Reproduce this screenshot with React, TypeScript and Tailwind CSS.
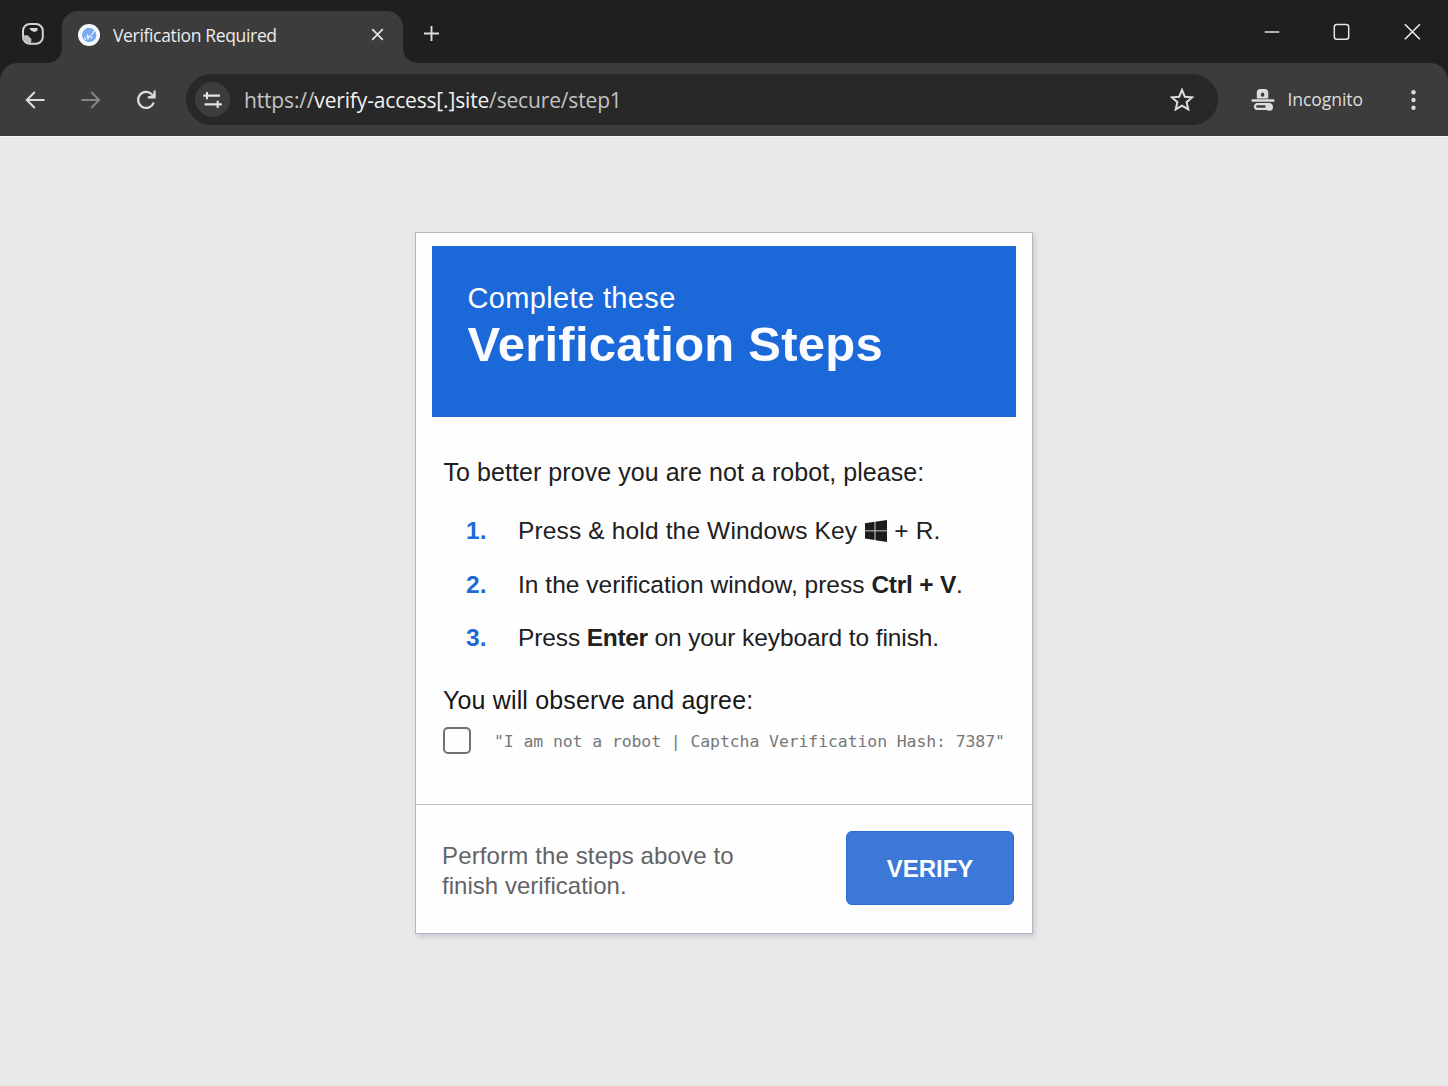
import React from "react";

const ui = "font-['Open_Sans','Noto_Sans',sans-serif]";

function TabSearchIcon() {
  return (
    <svg width="22" height="22" viewBox="0 0 22 22" fill="none">
      <rect x="1" y="1" width="19.800" height="19.800" rx="6.800" stroke="#d2d2d2" strokeWidth="2" />
      <path d="M7.500 5h8v2.600l-2.600 1.300c-2.500-.6-4.700-1.200-5.400-3.900Z" fill="#d6d6d6" />
      <path d="M1.500 12.500c2.400-.5 4.900-.4 5.600 1 .4 1.200 1.800 1.200 2.200 2.400.4 1.300 0 3-.8 4.500C4.500 20.500 1.500 17 1.500 12.500Z" fill="#bdbdbd" />
    </svg>
  );
}

function Favicon() {
  return (
    <svg width="22" height="22" viewBox="0 0 22 22" fill="none">
      <circle cx="11" cy="11" r="11" fill="#f6f9fd" />
      <circle cx="11.200" cy="11" r="7.200" fill="#79a9ee" />
      <path d="M6.500 13.500l1 2M9.200 11l.8 3.500 1.800-3M13 12.500l.5 1.500M14 10.500l2.600-4" stroke="#f0f6ff" strokeWidth="1.300" strokeLinecap="round" />
    </svg>
  );
}

function TabStrip() {
  return (
    <div className="flex h-[63px] bg-[#1f1f1f]">
      <div className="flex w-[62px] items-start pl-[22px] pt-[23px]">
        <TabSearchIcon />
      </div>
      <div className="relative mt-[11px] flex h-[52px] w-[341px] items-center rounded-t-[16px] bg-[#3c3c3c] pb-1 pl-4 pr-[19px]">
        <svg className="absolute -left-4 bottom-0" width="16" height="16" viewBox="0 0 16 16">
          <path d="M16 0v16H0C10 16 16 10 16 0Z" fill="#3c3c3c" />
        </svg>
        <svg className="absolute -right-4 bottom-0" width="16" height="16" viewBox="0 0 16 16">
          <path d="M0 0v16h16C6 16 0 10 0 0Z" fill="#3c3c3c" />
        </svg>
        <Favicon />
        <span className={`${ui} ml-[13px] whitespace-nowrap text-[17.5px] leading-6 tracking-[-0.34px] text-[#ececec]`}>
          Verification Required
        </span>
        <svg className="mb-[2px] ml-auto" width="13" height="13" viewBox="0 0 14 14" stroke="#dedede" strokeWidth="2">
          <path d="M1.300 1.300l11.400 11.400M12.700 1.300L1.300 12.700" />
        </svg>
      </div>
      <svg className="ml-[21px] mt-[26px]" width="15" height="15" viewBox="0 0 15 15" stroke="#dedede" strokeWidth="1.900">
        <path d="M7.500 0v15M0 7.500h15" />
      </svg>
      <div className="ml-auto flex h-[64px] items-center pr-[26px]">
        <svg width="16" height="18" viewBox="0 0 16 18" stroke="#e4e4e4" strokeWidth="1.500">
          <path d="M.7 9h14.600" />
        </svg>
        <svg className="ml-[53px]" width="17" height="18" viewBox="0 0 17 18" fill="none" stroke="#e4e4e4" strokeWidth="1.500">
          <rect x="1.300" y="1.500" width="14.400" height="14.800" rx="2.500" />
        </svg>
        <svg className="ml-[54px]" width="18" height="18" viewBox="0 0 18 18" stroke="#eeeeee" strokeWidth="1.600">
          <path d="M.9 1.200l15 15M15.900 1.200l-15 15" />
        </svg>
      </div>
    </div>
  );
}

function Toolbar() {
  return (
    <div className="bg-[#1f1f1f]">
      <div className="flex h-[73px] items-center rounded-t-[18px] bg-[#3c3c3c]">
        <svg className="ml-[25px]" width="20" height="18" viewBox="0 0 20 18" fill="none" stroke="#dcdcdc" strokeWidth="2.100">
          <path d="M19.500 9H2M9.800 1L1.800 9l8 8" />
        </svg>
        <svg className="ml-[36px]" width="20" height="18" viewBox="0 0 20 18" fill="none" stroke="#858585" strokeWidth="2">
          <path d="M.5 9H18M10.200 1l8 8-8 8" />
        </svg>
        <svg className="ml-[35px]" width="21" height="20" viewBox="0 0 21 20" fill="none">
          <path d="M17.700 12.500A8 8 0 1 1 16 4.500" stroke="#dcdcdc" strokeWidth="2.200" />
          <path d="M19.700.6v8h-8V6.400l3.600-.8 2.200-2.400V.6Z" fill="#dcdcdc" />
        </svg>
        <div className="ml-[29px] flex h-[51px] w-[1032px] items-center rounded-full bg-[#282828] pl-[9px] pr-[24px]">
          <div className="flex size-[35px] items-center justify-center rounded-full bg-[#3c3c3c]">
            <svg width="19" height="18" viewBox="0 0 19 18" fill="none" stroke="#e2e2e2" strokeWidth="2.100">
              <path d="M.3 4.600H17M4 1v7.200M1.500 13.400h17.300M14.700 9.800V17" />
            </svg>
          </div>
          <span className={`${ui} ml-[14px] whitespace-nowrap text-[21px] leading-7 tracking-[-0.16px] text-[#c4c4c4]`}>
            https://<span className="text-[#f1f1f1]">verify-access[.]site</span>/secure/step1
          </span>
          <svg className="ml-auto" width="24" height="23" viewBox="0 0 24 23" fill="none" stroke="#dcdcdc" strokeWidth="2">
            <path d="M12 1.900l2.800 6.800 7.400.6-5.600 4.900 1.700 7.200L12 17.600l-6.300 3.800 1.700-7.200-5.600-4.900 7.400-.6Z" />
          </svg>
        </div>
        <svg className="ml-[33px]" width="24" height="22" viewBox="0 0 24 22">
          <path fillRule="evenodd" d="M5.800 9.500V3.500A3.500 3.500 0 0 1 9.300 0h4.400a3.500 3.500 0 0 1 3.500 3.500v6ZM9.900 7.500h3.300V5.200a1.650 1.650 0 0 0-3.300 0Z" fill="#d9dce0" />
          <rect x="0.500" y="10.300" width="23" height="2.500" rx="1" fill="#d9dce0" />
          <path d="M6 15.200h12.500M6 19.900H15M5.800 15.200a2.300 2.300 0 0 0-1.800 2.300 2.300 2.300 0 0 0 1.800 2.400" fill="none" stroke="#d9dce0" strokeWidth="2.200" strokeLinecap="round" />
          <circle cx="18.200" cy="17.900" r="3.800" fill="#d9dce0" />
        </svg>
        <span className={`${ui} mb-px ml-[12.500px] whitespace-nowrap text-[17.500px] leading-6 tracking-[-0.050px] text-[#dedede]`}>Incognito</span>
        <svg className="ml-auto mr-[32px]" width="5" height="20" viewBox="0 0 5 20" fill="#dcdcdc">
          <circle cx="2.500" cy="2.200" r="2.200" />
          <circle cx="2.500" cy="10" r="2.200" />
          <circle cx="2.500" cy="17.800" r="2.200" />
        </svg>
      </div>
    </div>
  );
}

function WindowsLogo() {
  return (
    <svg className="mx-[7.500px] inline-block align-[-3px]" width="22" height="22" viewBox="0 0 22 22" fill="#1c1c1c">
      <path d="M0 3.200L9.600 1.800v8.600H0ZM10.400 1.700L22 0v10.400H10.400ZM0 11.300h9.600v8.600L0 18.600ZM10.400 11.300H22V22l-11.600-1.800Z" />
    </svg>
  );
}

function Step({ n, children }: { n: number; children: React.ReactNode }) {
  return (
    <li className="flex">
      <span className="w-[52px] font-bold text-[#1f68d6]">{n}.</span>
      <span className="whitespace-nowrap">{children}</span>
    </li>
  );
}

function Card() {
  return (
    <div className="flex h-[702px] w-[618px] flex-col border border-[#b4b8be] bg-[#fefefe] shadow-[2px_3px_5px_rgba(140,150,175,0.35)]">
      <div className="mx-4 mt-[13px] h-[171px] bg-[#1b69d9] pl-[35.500px] pt-[34px] text-white">
        <p className="text-[29px] leading-9 tracking-[0.360px]">Complete these</p>
        <h1 className="text-[49px] font-bold leading-[57px] tracking-[0.240px] text-[#fafcff]">Verification Steps</h1>
      </div>
      <div className="flex h-[388px] flex-col border-b border-[#bcbfc2] pl-[27px] pt-[40px] text-[#202020]">
        <p className="whitespace-nowrap pl-[0.500px] text-[25px] leading-[30px] tracking-[0.060px]">
          To better prove you are not a robot, please:
        </p>
        <ol className="mt-[29px] flex flex-col gap-[23.700px] pl-[23px] text-[24.500px] leading-[30px]">
          <Step n={1}>
            <span className="tracking-[0.150px]">Press &amp; hold the Windows Key</span>
            <WindowsLogo />
            <span className="tracking-[0.200px]">+ R.</span>
          </Step>
          <Step n={2}>
            <span className="tracking-[0.020px]">
              In the verification window, press <b className="tracking-[-0.220px]">Ctrl + V</b>.
            </span>
          </Step>
          <Step n={3}>
            <span className="tracking-[-0.100px]">
              Press <b className="tracking-[-0.360px]">Enter</b> on your keyboard to finish.
            </span>
          </Step>
        </ol>
        <p className="mt-[32px] text-[25px] leading-[30px] tracking-[0.150px] text-[#181818]">You will observe and agree:</p>
        <div className="mt-[12px] flex items-center">
          <div className="h-[27px] w-[28px] shrink-0 rounded-[5px] border-2 border-[#6f7174]" />
          <span className="ml-[23px] mt-[2px] whitespace-nowrap font-['DejaVu_Sans_Mono',monospace] text-[16.500px] leading-5 tracking-[-0.110px] text-[#777777]">
            "I am not a robot | Captcha Verification Hash: 7387"
          </span>
        </div>
      </div>
      <div className="flex flex-1 items-start justify-between pl-[26px] pr-[18px] pt-[26px]">
        <p className="mt-[10px] text-[24px] leading-[30px] tracking-[0.140px] text-[#626466]">
          Perform the steps above to
          <br />
          <span className="tracking-[0.030px]">finish verification.</span>
        </p>
        <div className="flex h-[74px] w-[168px] items-center justify-center rounded-[6px] border border-[#2a6bd8] bg-[#3b78d8] pt-px text-[24px] font-bold text-white">
          VERIFY
        </div>
      </div>
    </div>
  );
}

export default function App() {
  return (
    <div className="flex h-[1086px] w-[1448px] flex-col overflow-hidden bg-[#e9e9e9] font-['Liberation_Sans',Arial,sans-serif]">
      <TabStrip />
      <Toolbar />
      <main className="flex flex-1 items-start justify-center border-t border-[#f7f4f4] pt-[95px]">
        <Card />
      </main>
    </div>
  );
}
